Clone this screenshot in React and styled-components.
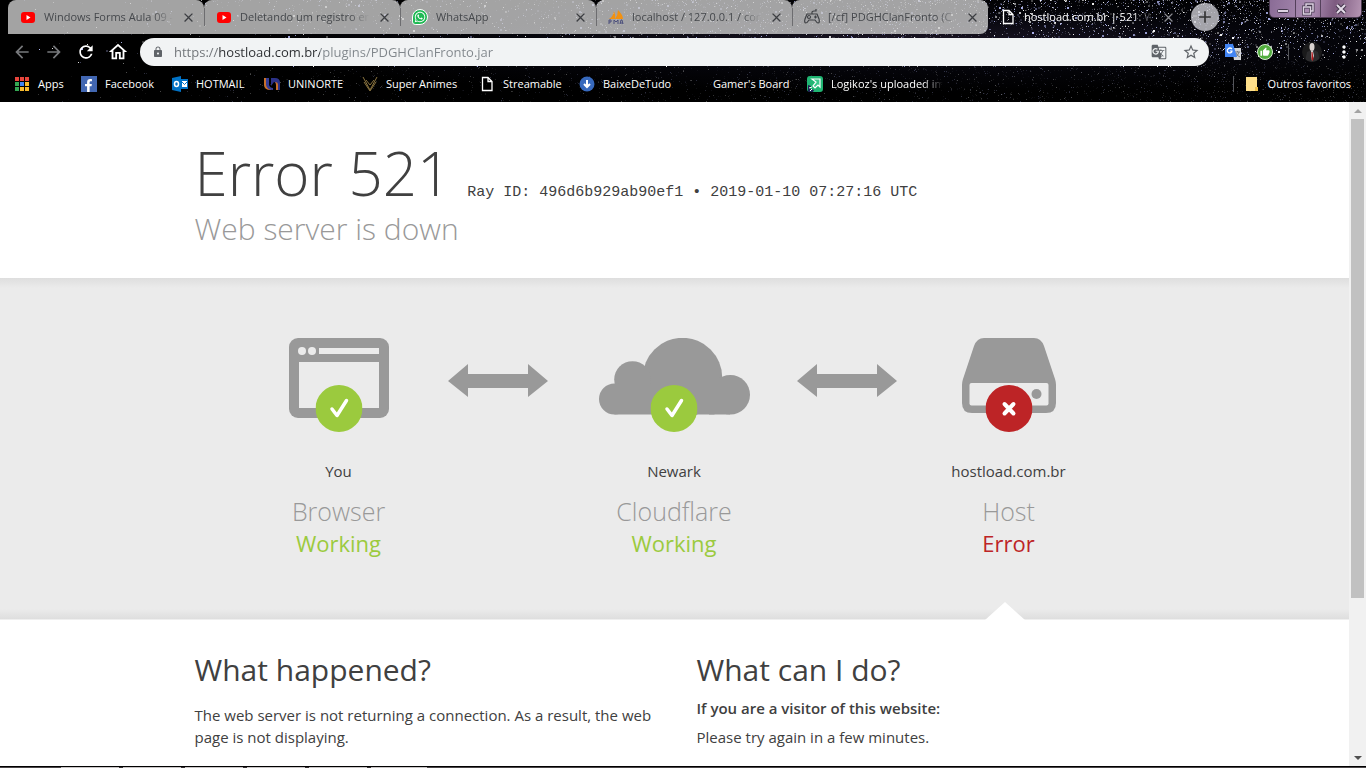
import React from 'react';
import styled, { createGlobalStyle, css } from 'styled-components';
import {
  MdAdd,
  MdArrowBack,
  MdArrowForward,
  MdClose,
  MdGTranslate,
  MdLock,
  MdMoreVert,
  MdOutlineHome,
  MdRefresh,
  MdStarBorder,
  MdThumbUp,
} from 'react-icons/md';
import { FaFacebookF, FaWhatsapp } from 'react-icons/fa';

const GlobalStyle = createGlobalStyle`
  * {
    box-sizing: border-box;
  }

  body {
    margin: 0;
    background: #000;
    color: #404040;
    font-family: 'Open Sans', 'Noto Sans', sans-serif;
    font-size: 15px;
    line-height: 22px;
  }

  h1, h2, h3, p {
    margin: 0;
  }

  button {
    border: 0;
    padding: 0;
    background: none;
    color: inherit;
    font: inherit;
  }

  svg {
    display: block;
    flex-shrink: 0;
  }
`;

/* ---------- starry theme ---------- */

const makeStars = (count) => {
  let seed = 521;
  const rand = () => {
    seed = (seed * 16807) % 2147483647;
    return seed / 2147483647;
  };

  const stars = [];
  for (let i = 0; i < count; i++) {
    const x = Math.pow(rand(), 0.5) * 100;
    const y = Math.floor(Math.pow(rand(), 1.3) * 102);
    const dim = y > 66 || (x > 88 && y > 58) ? 0.3 : 1;
    stars.push({
      x,
      y,
      size: rand() > 0.92 && y < 56 ? 2 : 1,
      opacity: (0.15 + Math.pow(rand(), 2) * 0.85) * dim,
      fill: rand() > 0.5 ? '#ffffff' : '#b4baf5',
    });
  }
  return stars;
};

const STARS = makeStars(7000);

const SkySvg = styled.svg`
  position: absolute;
  inset: 0;
  width: 100%;
  height: 100%;
`;

const Sky = () => (
  <SkySvg aria-hidden="true" shapeRendering="crispEdges">
    {STARS.map((star, i) => (
      <rect
        key={i}
        x={`${star.x}%`}
        y={star.y}
        width={star.size}
        height={star.size}
        fill={star.fill}
        opacity={star.opacity}
      />
    ))}
  </SkySvg>
);

/* ---------- browser chrome ---------- */

const Window = styled.div`
  display: flex;
  flex-direction: column;
  height: 100vh;
  overflow: hidden;
`;

const Chrome = styled.header`
  position: relative;
  flex-shrink: 0;
  background: radial-gradient(ellipse at 66% 40%, #1a1524 0, #05050b 30%, #000 60%);
  color: #fff;
  font-size: 11px;
  line-height: 16px;
`;

const ChromeRows = styled.div`
  position: relative;
`;

const TabStrip = styled.div`
  display: flex;
  height: 38px;
  padding: 0 4px 0 8px;
`;

const TabItem = styled.div`
  display: flex;
  align-items: center;
  flex: 0 1 196px;
  min-width: 0;
  height: 34px;
  padding-right: 8px;
  border-radius: ${({ $last }) => ($last ? '8px 8px 8px 0' : '8px 8px 0 0')};
  background: rgba(204, 204, 204, 0.8);
  color: #45484c;

  &::before {
    content: '';
    width: 1px;
    height: 18px;
    margin-right: 11px;
    background: ${({ $first }) => ($first ? 'transparent' : '#6d6d70')};
  }

  ${({ $active }) =>
    $active &&
    css`
      background: none;
      color: #fff;

      &::before {
        background: none;
      }
    `}
`;

const TabLabel = styled.span`
  flex: 1;
  margin: 0 8px;
  overflow: hidden;
  white-space: nowrap;
  mask-image: linear-gradient(to right, #000 calc(100% - 20px), transparent);
`;

const TabClose = styled.button`
  color: ${({ $active }) => ($active ? '#8d8d93' : '#3c3e42')};
`;

const NewTab = styled.button`
  display: flex;
  align-items: center;
  justify-content: center;
  width: 28px;
  height: 28px;
  margin: 3px 0 0 7px;
  border-radius: 50%;
  background: rgba(204, 204, 210, 0.8);
  color: #333;
`;

const WindowButtons = styled.div`
  display: flex;
  height: 18px;
  margin-left: auto;
  border: 1px solid #4b3a50;
  border-top: 0;
  border-radius: 0 0 5px 5px;
  background: linear-gradient(100deg, #8a6c96, #ab8db3 45%, #7d5b80 70%, #b595b3);
  overflow: hidden;
`;

const WindowButton = styled.button`
  display: flex;
  align-items: center;
  justify-content: center;
  width: ${({ $wide }) => ($wide ? '41px' : '25px')};

  & + & {
    border-left: 1px solid #54405b;
  }
`;

const Toolbar = styled.div`
  display: flex;
  align-items: center;
  height: 28px;
  padding: 0 6px;
`;

const ToolButton = styled.button`
  display: flex;
  align-items: center;
  justify-content: center;
  width: 32px;
  height: 28px;
  color: ${({ $muted }) => ($muted ? '#77797c' : '#fff')};
`;

const Omnibox = styled.div`
  display: flex;
  align-items: center;
  flex: 1;
  height: 28px;
  margin: 0 8px 0 6px;
  padding: 0 2px 0 12px;
  border-radius: 14px;
  background: #f1f3f4;
  color: #5f6368;
`;

/* The host part of the address is darker than the scheme and the path */
const Address = styled.input`
  flex: 1;
  min-width: 0;
  margin-left: 10px;
  padding: 0;
  border: 0;
  outline: 0;
  background: linear-gradient(to right, #6d7175 45px, #2b2d30 45px 146px, #80868b 146px);
  background-clip: text;
  -webkit-background-clip: text;
  color: #6d7175;
  -webkit-text-fill-color: transparent;
  font-family: inherit;
  font-size: 13px;
`;

const Separator = styled.span`
  width: 1px;
  height: 16px;
  margin: 0 ${({ $gap = 7 }) => $gap}px;
  background: #55565a;
`;

const Avatar = styled.span`
  display: flex;
  width: 20px;
  height: 20px;
  margin: 0 6px;
  border-radius: 50%;
  background: #1a1a1b;
  overflow: hidden;
`;

const BookmarkBar = styled.nav`
  display: flex;
  align-items: center;
  height: 36px;
  padding: 0 15px 0 14px;
`;

const Bookmark = styled.a`
  display: flex;
  align-items: center;
  gap: 8px;
  flex: 0 0 ${({ $width }) => ($width ? `${$width}px` : 'auto')};
  color: #fff;
  text-decoration: none;
  white-space: nowrap;
`;

const BookmarkLabel = styled.span`
  ${({ $fade }) =>
    $fade &&
    css`
      width: 112px;
      overflow: hidden;
      mask-image: linear-gradient(to right, #000 calc(100% - 20px), transparent);
    `}
`;

const IconSlot = styled.span`
  display: flex;
  align-items: center;
  justify-content: center;
  width: 16px;
  height: 16px;
  flex-shrink: 0;
`;

const BarEnd = styled.div`
  display: flex;
  align-items: center;
  margin-left: auto;
`;

const YoutubeIcon = () => (
  <svg width="16" height="16" viewBox="0 0 16 16">
    <rect x="1" y="3" width="14" height="11" rx="3" fill="#f00" />
    <path d="M6.5 6v5l4-2.500z" fill="#fff" />
  </svg>
);

const WhatsappBubble = styled.span`
  display: flex;
  align-items: center;
  justify-content: center;
  width: 16px;
  height: 16px;
  border: 1px solid #fff;
  border-radius: 50% 50% 50% 20%;
  background: #20b954;
  color: #fff;
`;

const PmaIcon = () => (
  <svg width="16" height="16" viewBox="0 0 16 16">
    <path d="M1 10Q5 8 6 2q2 4 1 8zM7 10Q10 6 10 1q5 5 5 9z" fill="#f29111" />
    <path d="M1 15v-4h2v2H1M6 15v-4l2 2 2-2v4M12 15l1-4h1l1 4M12 14h3" fill="none" stroke="#4b4f7c" />
  </svg>
);

const GamepadIcon = () => (
  <svg width="18" height="18" viewBox="0 0 18 18" fill="none" stroke="#3f4145" strokeWidth="1.200">
    <path d="M4 6h10l2 5q1 4-1 4-1 0-3-3H6q-2 3-3 3-2 0-1-4zM9 6V4q0-1 2-1h2V1" />
    <circle cx="6" cy="9" r="1.500" />
    <path d="M11 9h3M12.500 7.500v3" />
  </svg>
);

const PageIcon = () => (
  <svg width="16" height="16" viewBox="0 0 16 16" fill="none" stroke="#fff" strokeWidth="1.300">
    <path d="M3.500 1.500h5.500l4 4v9h-9.500zM9 1.500v4h4" />
  </svg>
);

const AppsIcon = () => (
  <svg width="14" height="14" viewBox="0 0 14 14">
    {['#e8453c', '#e8453c', '#e8453c', '#34a853', '#4285f4', '#f9bb2d', '#34a853', '#f9bb2d', '#f9bb2d'].map(
      (fill, i) => (
        <rect key={i} x={(i % 3) * 5} y={Math.floor(i / 3) * 5} width="4" height="4" fill={fill} />
      )
    )}
  </svg>
);

const FacebookBox = styled.span`
  display: flex;
  align-items: flex-end;
  justify-content: flex-end;
  width: 16px;
  height: 16px;
  padding-right: 2px;
  background: #4267b2;
`;

const OutlookIcon = () => (
  <svg width="16" height="16" viewBox="0 0 16 16">
    <path d="M0 2l9-2v16l-9-2z" fill="#0072c6" />
    <path d="M9 3h7v10H9z" fill="#0072c6" />
    <path d="M10 5h5v6h-5z" fill="#fff" />
    <path d="M10 6l2.500 2.500L15 6" fill="none" stroke="#0072c6" />
    <ellipse cx="4.500" cy="8" rx="2" ry="2.500" fill="none" stroke="#fff" strokeWidth="1.500" />
  </svg>
);

const UninorteIcon = () => (
  <svg width="16" height="16" viewBox="0 0 16 16">
    <path d="M0 2h4v8q0 2 3 3v1Q0 14 0 9z" fill="#c8702c" />
    <path d="M2 2h3v7q1 3 4 3v2Q3 14 2 9z" fill="#353c96" />
    <path d="M7 2h4q5 0 5 5v7h-4V9q0-3-2-3l-3 4z" fill="#2b3187" />
    <path d="M12 14V9q0-2-1-3 3 0 3 3v5z" fill="#c8702c" />
  </svg>
);

const AnimesIcon = () => (
  <svg width="16" height="16" viewBox="0 0 16 16" fill="none" stroke="#8a7440">
    <path d="M1 1l7 13 7-13M4 4l4 5 4-5M2 6l6 9 6-9" />
  </svg>
);

const DownloadIcon = () => (
  <svg width="16" height="16" viewBox="0 0 16 16">
    <circle cx="8" cy="8" r="7.500" fill="#3769bd" />
    <path d="M8 4v7M5 8l3 3 3-3" fill="none" stroke="#fff" strokeWidth="2" />
  </svg>
);

const GyazoIcon = () => (
  <svg width="16" height="16" viewBox="0 0 16 16">
    <rect width="16" height="16" rx="3" fill="#20b573" />
    <path d="M5 3h8v8l-2-2-3 3-2-2 3-4z" fill="#37c98b" stroke="#fff" strokeWidth="1.200" />
    <path d="M1 9l3 1-1 3 4 1-1 2H1z" fill="#1b2050" />
    <path d="M2 12l3-1M3 15l2-2" stroke="#fff" />
  </svg>
);

const FolderIcon = () => (
  <svg width="16" height="16" viewBox="0 0 16 16">
    <path d="M2 1h11v10h1v4H2z" fill="#ffe08a" />
    <path d="M11 11h3v4h-3z" fill="#efc14a" />
  </svg>
);

const TranslateIcon = () => (
  <svg width="16" height="16" viewBox="0 0 16 16">
    <path d="M7 4h9v12H9z" fill="#d5d7da" />
    <path d="M10 8h5M12.500 7v1M14 8q-1 4-4 5M11 9q1 3 4 4" fill="none" stroke="#777b80" />
    <path d="M0 0h8l4 13H0z" fill="#4285f4" />
    <path d="M7 5Q5 3 3 5T4 9q3 0 3-2H5" fill="none" stroke="#fff" strokeWidth="1.200" />
  </svg>
);

const ThumbBadge = styled.span`
  display: flex;
  align-items: center;
  justify-content: center;
  width: 16px;
  height: 16px;
  border: 1px solid #d9efd3;
  border-radius: 50%;
  background: #52ad3f;
`;

const FigureIcon = () => (
  <svg width="20" height="20" viewBox="0 0 20 20">
    <path d="M3 20l2-10 4-2 3 0 4 2 2 10z" fill="#2b2b2d" />
    <ellipse cx="10" cy="5" rx="2.500" ry="4" fill="#d9d3d0" />
    <path d="M9 9h2l1 5-2 5-1-5z" fill="#cfcfcf" />
    <path d="M9.500 10h1l1 7-1 2-1-2z" fill="#b3191d" />
  </svg>
);

const TABS = [
  { title: 'Windows Forms Aula 09 -', icon: <YoutubeIcon /> },
  { title: 'Deletando um registro em', icon: <YoutubeIcon /> },
  {
    title: 'WhatsApp',
    icon: (
      <WhatsappBubble>
        <FaWhatsapp size={12} />
      </WhatsappBubble>
    ),
  },
  { title: 'localhost / 127.0.0.1 / con', icon: <PmaIcon /> },
  { title: '[/cf] PDGHClanFronto (C', icon: <GamepadIcon /> },
  { title: 'hostload.com.br | 521: W', icon: <PageIcon />, active: true },
];

const BOOKMARKS = [
  { label: 'Apps', width: 67, icon: <AppsIcon /> },
  {
    label: 'Facebook',
    width: 91,
    icon: (
      <FacebookBox>
        <FaFacebookF size={13} />
      </FacebookBox>
    ),
  },
  { label: 'HOTMAIL', width: 92, icon: <OutlookIcon /> },
  { label: 'UNINORTE', width: 98, icon: <UninorteIcon /> },
  { label: 'Super Animes', width: 117, icon: <AnimesIcon /> },
  { label: 'Streamable', width: 100, icon: <PageIcon /> },
  { label: 'BaixeDeTudo', width: 110, icon: <DownloadIcon /> },
  { label: "Gamer's Board", width: 118, icon: null },
  { label: "Logikoz's uploaded im", width: 136, icon: <GyazoIcon />, fade: true },
];

const BrowserChrome = () => (
  <Chrome>
    <Sky />
    <ChromeRows>
      <TabStrip>
        {TABS.map((tab, i) => (
          <TabItem
            key={tab.title}
            $first={i === 0}
            $last={i === TABS.length - 2}
            $active={tab.active}
          >
            <IconSlot>{tab.icon}</IconSlot>
            <TabLabel>{tab.title}</TabLabel>
            <TabClose $active={tab.active} aria-label="Close tab">
              <MdClose size={15} />
            </TabClose>
          </TabItem>
        ))}
        <NewTab aria-label="New tab">
          <MdAdd size={20} />
        </NewTab>
        <WindowButtons>
          <WindowButton aria-label="Minimize">
            <svg width="12" height="12" viewBox="0 0 12 12">
              <rect x="0.500" y="6.500" width="11" height="3" rx="1" fill="#ddd2e2" stroke="#43364c" />
            </svg>
          </WindowButton>
          <WindowButton aria-label="Restore">
            <svg width="14" height="14" viewBox="0 0 14 14" fill="none">
              <path d="M5 4V2h7v7h-2M2.500 5h7v7h-7z" stroke="#43364c" strokeWidth="3" />
              <path d="M5 4V2h7v7h-2M2.500 5h7v7h-7z" stroke="#ddd2e2" strokeWidth="1.500" />
            </svg>
          </WindowButton>
          <WindowButton $wide aria-label="Close">
            <svg width="12" height="12" viewBox="0 0 12 12">
              <path d="M2 2l8 8M10 2l-8 8" stroke="#43364c" strokeWidth="4" />
              <path d="M2 2l8 8M10 2l-8 8" stroke="#e4dbe8" strokeWidth="2" />
            </svg>
          </WindowButton>
        </WindowButtons>
      </TabStrip>
      <Toolbar>
        <ToolButton $muted aria-label="Back">
          <MdArrowBack size={20} />
        </ToolButton>
        <ToolButton $muted aria-label="Forward">
          <MdArrowForward size={20} />
        </ToolButton>
        <ToolButton aria-label="Reload">
          <MdRefresh size={20} />
        </ToolButton>
        <ToolButton aria-label="Home">
          <MdOutlineHome size={22} />
        </ToolButton>
        <Omnibox>
          <MdLock size={12} />
          <Address
            aria-label="Address"
            type="text"
            defaultValue="https://hostload.com.br/plugins/PDGHClanFronto.jar"
          />
          <ToolButton as="span">
            <MdGTranslate size={16} color="#5f6368" />
          </ToolButton>
          <ToolButton as="span">
            <MdStarBorder size={18} color="#5f6368" />
          </ToolButton>
        </Omnibox>
        <ToolButton aria-label="Translate">
          <TranslateIcon />
        </ToolButton>
        <ToolButton aria-label="Like">
          <ThumbBadge>
            <MdThumbUp size={10} />
          </ThumbBadge>
        </ToolButton>
        <Separator />
        <Avatar>
          <FigureIcon />
        </Avatar>
        <ToolButton aria-label="Menu">
          <MdMoreVert size={20} />
        </ToolButton>
      </Toolbar>
      <BookmarkBar>
        {BOOKMARKS.map((item) => (
          <Bookmark key={item.label} href="#" $width={item.width}>
            <IconSlot>{item.icon}</IconSlot>
            <BookmarkLabel $fade={item.fade}>{item.label}</BookmarkLabel>
          </Bookmark>
        ))}
        <BarEnd>
          <Separator $gap={10} />
          <Bookmark href="#">
            <IconSlot>
              <FolderIcon />
            </IconSlot>
            <BookmarkLabel>Outros favoritos</BookmarkLabel>
          </Bookmark>
        </BarEnd>
      </BookmarkBar>
    </ChromeRows>
  </Chrome>
);

/* ---------- error page ---------- */

const Viewport = styled.div`
  display: flex;
  flex: 1;
  min-height: 0;
  background: #fff;
`;

const Page = styled.main`
  flex: 1;
  min-width: 0;
  overflow: hidden;
`;

const Wrapper = styled.div`
  max-width: 960px;
  margin: 0 auto;
`;

const Headline = styled(Wrapper)`
  padding: 35px 0 30px;
`;

const TitleRow = styled.div`
  display: flex;
  align-items: baseline;
  gap: 16px;
`;

const Title = styled.h1`
  font-size: 60px;
  font-weight: 300;
  line-height: 72px;
`;

const RayId = styled.span`
  font-family: 'Liberation Mono', monospace;
`;

const Subtitle = styled.h2`
  color: #999;
  font-size: 30px;
  font-weight: 300;
  line-height: 39px;
`;

const StatusBand = styled.section`
  padding: 60px 0;
  border-bottom: 1px solid #efefef;
  background:
    linear-gradient(to bottom, #dedede, #ebebeb) top / 100% 10px no-repeat,
    linear-gradient(to top, #dedede, #ebebeb) bottom / 100% 10px no-repeat,
    #ebebeb;
`;

const StatusGrid = styled(Wrapper)`
  position: relative;
  display: grid;
  grid-template-columns: 218fr 104px 245fr 104px 216fr;
  padding: 0 38px 0 35px;
`;

const Status = styled.div`
  display: flex;
  flex-direction: column;
  align-items: center;
`;

const StatusIcon = styled.div`
  position: relative;
  height: 94px;
  margin-bottom: 28px;
`;

const Badge = styled.svg`
  position: absolute;
  bottom: 0;
  left: 50%;
  transform: translateX(-50%);
`;

const Service = styled.h3`
  margin-top: 13px;
  color: #999;
  font-size: 25px;
  font-weight: 300;
  line-height: 32px;
`;

const Result = styled.span`
  color: ${({ $ok }) => ($ok ? '#9bca3e' : '#bd2426')};
  font-size: 22px;
  line-height: 32px;
`;

const ArrowCell = styled.div`
  padding-top: 26px;
`;

/* Caret that points from the details up to the failing host */
const Caret = styled.span`
  position: absolute;
  right: 130px;
  bottom: -61px;
  border: solid transparent;
  border-width: 0 20px 18px;
  border-bottom-color: #fff;
`;

const Details = styled(Wrapper)`
  display: grid;
  grid-template-columns: 1fr 1fr;
  gap: 44px;
  padding: 30px 0;
`;

const DetailTitle = styled.h2`
  font-size: 30px;
  font-weight: 400;
  line-height: 39px;
`;

const Text = styled.p`
  margin-top: ${({ $top }) => $top}px;
  font-weight: ${({ $strong }) => ($strong ? 600 : 400)};
`;

const BrowserDrawing = () => (
  <svg width="100" height="80" viewBox="0 0 100 80">
    <rect width="100" height="80" rx="9" fill="#999" />
    <g fill="#ebebeb">
      <circle cx="13" cy="13" r="4" />
      <circle cx="23" cy="13" r="4" />
      <rect x="30" y="10" width="60" height="6" />
      <rect x="10" y="24" width="80" height="46" />
    </g>
  </svg>
);

const CloudDrawing = () => (
  <svg width="151" height="77" viewBox="0 0 151 77" fill="#999">
    <circle cx="83.500" cy="39.500" r="39.700" />
    <circle cx="33.500" cy="41.500" r="18.300" />
    <circle cx="15.500" cy="61" r="15.500" />
    <circle cx="131.300" cy="56.700" r="19.700" />
    <rect x="15.500" y="46" width="100" height="30.500" />
    <rect x="110" y="57" width="21" height="19.500" />
  </svg>
);

const ServerDrawing = () => (
  <svg width="94" height="75" viewBox="0 0 94 75">
    <path
      d="M22 0h50q7 0 10 8l11 33q1 3 1 6v18q0 10-10 10H10Q0 75 0 65V47q0-3 1-6L12 8q3-8 10-8z"
      fill="#999"
    />
    <rect x="7.500" y="45" width="79" height="22.500" rx="2" fill="#ebebeb" />
    <circle cx="74.500" cy="56" r="5" fill="#999" />
  </svg>
);

const ArrowDrawing = () => (
  <svg width="100" height="33" viewBox="0 0 100 33">
    <path d="M0 17L20 0v10h60V0l20 17-20 16v-9H20v9z" fill="#999" />
  </svg>
);

const StatusColumn = ({ drawing, place, service, ok }) => (
  <Status>
    <StatusIcon>
      {drawing}
      <Badge width="47" height="47" viewBox="0 0 47 47" fill="none">
        <circle cx="23.500" cy="23.500" r="23.500" fill={ok ? '#9bca3e' : '#bd2426'} />
        {ok ? (
          <path
            d="M16.500 24l5 6.500L31 15.500"
            stroke="#fff"
            strokeWidth="3.500"
            strokeLinecap="round"
            strokeLinejoin="round"
          />
        ) : (
          <path d="M19 19l9 9.500M28 19l-9 9.500" stroke="#fff" strokeWidth="4" strokeLinecap="round" />
        )}
      </Badge>
    </StatusIcon>
    <span>{place}</span>
    <Service>{service}</Service>
    <Result $ok={ok}>{ok ? 'Working' : 'Error'}</Result>
  </Status>
);

/* ---------- scrollbar and taskbar edge ---------- */

const Scrollbar = styled.div`
  display: flex;
  flex-direction: column;
  width: 17px;
  padding: 0 2px;
  background: #f1f1f1;
`;

const ScrollButton = styled.button`
  display: flex;
  align-items: center;
  justify-content: center;
  height: 17px;
  color: ${({ $disabled }) => ($disabled ? '#a3a3a3' : '#505050')};
`;

const ScrollTrack = styled.div`
  flex: 1;
`;

const ScrollThumb = styled.div`
  height: 76%;
  background: #c1c1c1;
`;

const TaskbarEdge = styled.footer`
  flex-shrink: 0;
  height: 2px;
  border-top: 1px solid #000;
  background:
    repeating-linear-gradient(to right, #c9c5c6 0 58px, #332e30 58px 62px) 61px 0 / 366px 1px no-repeat,
    #4a4648;
`;

const App = () => (
  <Window>
    <GlobalStyle />
    <BrowserChrome />
    <Viewport>
      <Page>
        <Headline>
          <TitleRow>
            <Title>Error 521</Title>
            <RayId>Ray ID: 496d6b929ab90ef1 • 2019-01-10 07:27:16 UTC</RayId>
          </TitleRow>
          <Subtitle>Web server is down</Subtitle>
        </Headline>
        <StatusBand>
          <StatusGrid>
            <StatusColumn drawing={<BrowserDrawing />} place="You" service="Browser" ok />
            <ArrowCell>
              <ArrowDrawing />
            </ArrowCell>
            <StatusColumn drawing={<CloudDrawing />} place="Newark" service="Cloudflare" ok />
            <ArrowCell>
              <ArrowDrawing />
            </ArrowCell>
            <StatusColumn drawing={<ServerDrawing />} place="hostload.com.br" service="Host" />
            <Caret />
          </StatusGrid>
        </StatusBand>
        <Details>
          <section>
            <DetailTitle>What happened?</DetailTitle>
            <Text $top={15}>
              The web server is not returning a connection. As a result, the web page is not
              displaying.
            </Text>
          </section>
          <section>
            <DetailTitle>What can I do?</DetailTitle>
            <Text $top={8} $strong>
              If you are a visitor of this website:
            </Text>
            <Text $top={7}>Please try again in a few minutes.</Text>
          </section>
        </Details>
      </Page>
      <Scrollbar>
        <ScrollButton $disabled aria-label="Scroll up">
          <svg width="8" height="4" viewBox="0 0 8 4">
            <path d="M0 4l4-4 4 4z" fill="currentColor" />
          </svg>
        </ScrollButton>
        <ScrollTrack>
          <ScrollThumb />
        </ScrollTrack>
        <ScrollButton aria-label="Scroll down">
          <svg width="8" height="4" viewBox="0 0 8 4">
            <path d="M0 0h8L4 4z" fill="currentColor" />
          </svg>
        </ScrollButton>
      </Scrollbar>
    </Viewport>
    <TaskbarEdge />
  </Window>
);

export default App;
